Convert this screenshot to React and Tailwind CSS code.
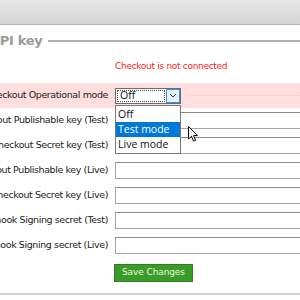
import React from "react";

const labelFont = "font-['DejaVu_Sans',Verdana,sans-serif] text-[9.5px] tracking-[-0.4px] text-[#222]";

const rows = [
  "Checkout Publishable key (Test)",
  "Checkout Secret key (Test)",
  "Checkout Publishable key (Live)",
  "Checkout Secret key (Live)",
  "Webhook Signing secret (Test)",
  "Webhook Signing secret (Live)",
];

const Label = ({ children }) => (
  <div className="w-[108px] shrink-0 flex justify-end overflow-visible">
    <span className={`shrink-0 whitespace-nowrap ${labelFont}`}>{children}</span>
  </div>
);

const App = () => {
  return (
    <div className="w-[300px] h-[300px] overflow-hidden bg-white relative">
      {/* top toolbar */}
      <div className="h-[25px] bg-gradient-to-b from-[#e6e6e6] to-[#d6d6d6] border-b border-[#b4b4b4]"></div>

      {/* fieldset legend */}
      <div className="flex items-center mt-[8px] h-[16px] -ml-[10px]">
        <span className="font-['DejaVu_Sans',Verdana,sans-serif] font-bold text-[13px] tracking-[-0.3px] text-[#9a9a9a] whitespace-nowrap">
          API key
        </span>
        <div className="flex-1 border-t-2 border-[#b0b0b0] ml-[6px]"></div>
      </div>

      <p className="mt-[11px] pl-[115px] font-['DejaVu_Sans',Verdana,sans-serif] text-[9px] tracking-[-0.3px] text-[#ff1a1a] leading-[12px]">
        Checkout is not connected
      </p>

      {/* rows */}
      <div className="mt-[11px] flex flex-col">
        <div className="flex items-center h-[25px] bg-[#ffdede] relative">
          <Label>Checkout Operational mode</Label>
          <div className="ml-[7px] w-[66px] h-[16px] border border-[#6d6d6d] bg-white flex items-stretch">
            <div className="flex-1 m-[1px] border border-dotted border-[#555] flex items-center pl-[2px] font-['Open_Sans',sans-serif] text-[10.5px] text-[#111]">
              Off
            </div>
            <div className="w-[14px] border border-[#3c8fd8] bg-[#e5f1fb] flex items-center justify-center">
              <svg width="8" height="5" viewBox="0 0 8 5">
                <path d="M1 1 L4 4 L7 1" fill="none" stroke="#333" strokeWidth="1" />
              </svg>
            </div>
          </div>
          <div className="flex-1 ml-[10px] border-t border-dotted border-[#f5c4c4]"></div>
        </div>

        {rows.map((r) => (
          <div key={r} className="flex items-center h-[25px]">
            <Label>{r}</Label>
            <div className="ml-[7px] flex-1 min-w-[200px] h-[17px] border border-[#a3a3a3] border-t-[#8a8a8a] bg-white"></div>
          </div>
        ))}

        <div className="flex h-[30px] items-center">
          <div className="w-[114px] shrink-0"></div>
          <button className="h-[18px] px-[7px] bg-[#3a9b28] border border-[#2e7f1e] font-['DejaVu_Sans',Verdana,sans-serif] text-[9px] tracking-[-0.1px] text-[#eaf6e4]">
            Save Changes
          </button>
        </div>
      </div>

      <div className="mt-[5px] border-t-2 border-[#d0d0d0]"></div>

      {/* open dropdown list */}
      <div className="absolute left-[115px] top-[105px] w-[66px] border border-[#7a7a7a] bg-white py-[1px] font-['Open_Sans',sans-serif] text-[10.5px] text-[#111]">
        <div className="h-[15px] flex items-center pl-[2px]">Off</div>
        <div className="h-[15px] flex items-center pl-[2px] bg-[#0078d7] text-white">Test mode</div>
        <div className="h-[15px] flex items-center pl-[2px]">Live mode</div>
      </div>

      {/* mouse cursor */}
      <svg className="absolute left-[188px] top-[126px]" width="11" height="17" viewBox="0 0 11 17">
        <path d="M0.5 0.5 L0.5 13 L3.5 10.3 L5.6 15.2 L7.6 14.3 L5.5 9.6 L9.5 9.6 Z" fill="#fff" stroke="#000" strokeWidth="1" strokeLinejoin="round" />
      </svg>
    </div>
  );
};

export default App;
